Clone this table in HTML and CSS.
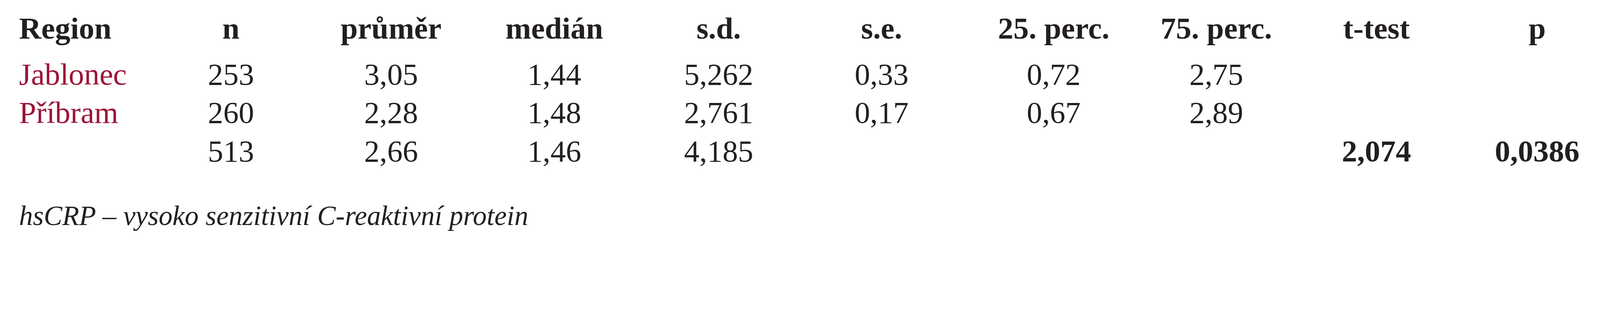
FILE: index.html
```html
<!DOCTYPE html>
<html lang="cs">
<head>
<meta charset="utf-8">
<title>hsCRP</title>
<link rel="stylesheet" href="styles.css">
</head>
<body>
<div class="page">
  <div class="stats">
    <div class="cell head first">Region</div>
    <div class="cell head">n</div>
    <div class="cell head">průměr</div>
    <div class="cell head">medián</div>
    <div class="cell head">s.d.</div>
    <div class="cell head">s.e.</div>
    <div class="cell head">25. perc.</div>
    <div class="cell head">75. perc.</div>
    <div class="cell head">t-test</div>
    <div class="cell head">p</div>

    <div class="cell first region">Jablonec</div>
    <div class="cell">253</div>
    <div class="cell">3,05</div>
    <div class="cell">1,44</div>
    <div class="cell">5,262</div>
    <div class="cell">0,33</div>
    <div class="cell">0,72</div>
    <div class="cell">2,75</div>
    <div class="cell"></div>
    <div class="cell"></div>

    <div class="cell first region">Příbram</div>
    <div class="cell">260</div>
    <div class="cell">2,28</div>
    <div class="cell">1,48</div>
    <div class="cell">2,761</div>
    <div class="cell">0,17</div>
    <div class="cell">0,67</div>
    <div class="cell">2,89</div>
    <div class="cell"></div>
    <div class="cell"></div>

    <div class="cell first"></div>
    <div class="cell">513</div>
    <div class="cell">2,66</div>
    <div class="cell">1,46</div>
    <div class="cell">4,185</div>
    <div class="cell"></div>
    <div class="cell"></div>
    <div class="cell"></div>
    <div class="cell bold">2,074</div>
    <div class="cell bold">0,0386</div>
  </div>
  <p class="note">hsCRP – vysoko senzitivní C-reaktivní protein</p>
</div>
</body>
</html>
```
FILE: styles.css
```css
:root {
  --u: calc(100vw / 5196);
}

html, body {
  margin: 0;
  padding: 0;
  background: #ffffff;
  overflow: hidden;
}

.page {
  padding: calc(31 * var(--u)) 0 0 calc(62 * var(--u));
  font-family: "Liberation Serif", "Times New Roman", serif;
  color: #231f20;
}

.stats {
  display: grid;
  grid-template-columns:
    calc(464 * var(--u)) calc(448 * var(--u)) calc(592 * var(--u))
    calc(468 * var(--u)) calc(600 * var(--u)) calc(458 * var(--u))
    calc(660 * var(--u)) calc(396 * var(--u)) calc(644 * var(--u))
    calc(400 * var(--u));
  grid-template-rows: calc(149 * var(--u));
  grid-auto-rows: calc(125 * var(--u));
  font-size: calc(100 * var(--u));
  line-height: calc(125 * var(--u));
}

.cell {
  text-align: center;
  white-space: nowrap;
}

.cell.first {
  text-align: left;
}

.head {
  font-weight: bold;
}

.region {
  color: #9a1538;
}

.bold {
  font-weight: bold;
}

.note {
  margin: calc(92 * var(--u)) 0 0 0;
  font-size: calc(90 * var(--u));
  line-height: calc(110 * var(--u));
  font-style: italic;
}
```
